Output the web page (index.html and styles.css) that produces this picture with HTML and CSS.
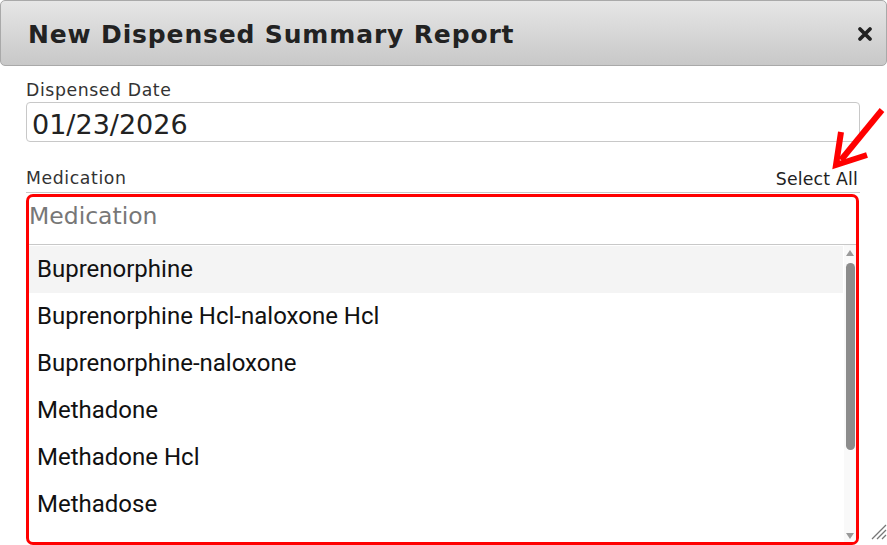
FILE: index.html
```html
<!DOCTYPE html>
<html>
<head>
<meta charset="utf-8">
<link rel="stylesheet" href="styles.css">
</head>
<body>
<div class="dialog">
  <header class="titlebar">
    <h1 class="title">New Dispensed Summary Report</h1>
    <svg class="close" width="16" height="16" viewBox="0 0 16 16"><path d="M3 3 L13 13 M13 3 L3 13" stroke="#222" stroke-width="3.8" stroke-linecap="round"/></svg>
  </header>
  <div class="content">
    <div class="label">Dispensed Date</div>
    <div class="date-input">01/23/2026</div>
    <div class="label-row">
      <span class="label">Medication</span>
      <span class="select-all">Select All</span>
    </div>
    <div class="multiselect">
      <div class="highlight">
        <div class="search">Medication</div>
        <div class="list-wrap">
          <ul class="list">
            <li class="item hover">Buprenorphine</li>
            <li class="item">Buprenorphine Hcl-naloxone Hcl</li>
            <li class="item">Buprenorphine-naloxone</li>
            <li class="item">Methadone</li>
            <li class="item">Methadone Hcl</li>
            <li class="item">Methadose</li>
          </ul>
          <div class="scrollbar">
            <div class="arrow-up"></div>
            <div class="thumb"></div>
            <div class="track-rest"></div>
            <div class="arrow-down"></div>
          </div>
        </div>
      </div>
    </div>
  </div>
  <svg class="annot" width="60" height="70" viewBox="0 0 60 70">
    <path d="M56 8 L15 58" stroke="#ff0000" stroke-width="6" stroke-linecap="butt"/>
    <path d="M15 30 L10 63 L41 53" fill="none" stroke="#ff0000" stroke-width="6" stroke-linejoin="miter"/>
  </svg>
  <svg class="grip" width="18" height="18" viewBox="0 0 18 18">
    <path d="M17 3 L3 17 M17 8 L8 17 M17 13 L13 17" stroke="#777" stroke-width="1.3"/>
  </svg>
</div>
</body>
</html>
```
FILE: styles.css
```css
html, body {
  margin: 0;
  padding: 0;
  background: #fff;
}
.dialog {
  position: relative;
  width: 887px;
  height: 545px;
  overflow: hidden;
  font-family: "DejaVu Sans", Verdana, sans-serif;
}
.titlebar {
  box-sizing: border-box;
  height: 66px;
  width: 887px;
  border: 1px solid #a9a9a9;
  border-radius: 5px;
  background: linear-gradient(to bottom, #e6e6e6, #c8c8c8);
  display: flex;
  align-items: center;
  justify-content: space-between;
  padding: 0 13px 0 27px;
}
.title {
  margin: 0;
  font-size: 25px;
  font-weight: bold;
  letter-spacing: 0.85px;
  color: #222;
  padding-top: 2px;
}
.close {
  display: block;
  margin-top: 1px;
}
.content {
  padding: 14px 27px 0 26px;
}
.label {
  font-size: 17.3px;
  line-height: 20px;
  letter-spacing: 0.6px;
  color: #333;
}
.date-input {
  box-sizing: border-box;
  margin-top: 2px;
  height: 40px;
  border: 1px solid #c8c8c8;
  border-radius: 4px;
  padding: 7px 5px 0;
  font-size: 27px;
  line-height: 30px;
  color: #222;
}
.label-row {
  display: flex;
  justify-content: space-between;
  margin-top: 26px;
  height: 21px;
  padding-right: 2px;
}
.select-all {
  font-size: 17.3px;
  line-height: 22px;
  letter-spacing: 0.2px;
  color: #222;
}
.multiselect {
  margin-top: 3px;
  border-top: 1px solid #c8c8c8;
  padding-top: 1px;
}
.highlight {
  box-sizing: border-box;
  height: 351px;
  border: 3px solid #ff0000;
  border-radius: 7px;
  margin-right: 1px;
  display: flex;
  flex-direction: column;
  overflow: hidden;
}
.search {
  box-sizing: border-box;
  height: 48px;
  border-bottom: 1px solid #c8c8c8;
  padding: 5px 0 0 0;
  font-size: 23.5px;
  line-height: 28px;
  color: #777;
}
.list-wrap {
  flex: 1;
  display: flex;
  min-height: 0;
}
.list {
  flex: 1;
  margin: 0;
  padding: 1px 0 0;
  list-style: none;
  overflow: hidden;
}
.item {
  height: 47px;
  line-height: 47px;
  padding-left: 8px;
  font-family: Roboto, sans-serif;
  font-size: 24px;
  color: #111;
}
.item.hover {
  background: #f4f4f4;
}
.scrollbar {
  width: 12px;
  margin-left: 1px;
  background: #f9f9f9;
  display: flex;
  flex-direction: column;
  align-items: center;
}
.arrow-up {
  margin-top: 5px;
  width: 0;
  height: 0;
  border-left: 4.5px solid transparent;
  border-right: 4.5px solid transparent;
  border-bottom: 6px solid #9a9a9a;
}
.thumb {
  margin-top: 7px;
  width: 9px;
  height: 187px;
  border-radius: 5px;
  background: #8c8c8c;
}
.track-rest {
  flex: 1;
}
.arrow-down {
  margin-bottom: 3px;
  width: 0;
  height: 0;
  border-left: 4.5px solid transparent;
  border-right: 4.5px solid transparent;
  border-top: 6px solid #9a9a9a;
}
.annot {
  position: absolute;
  left: 826px;
  top: 102px;
}
.grip {
  position: absolute;
  left: 869px;
  top: 522px;
}
```
